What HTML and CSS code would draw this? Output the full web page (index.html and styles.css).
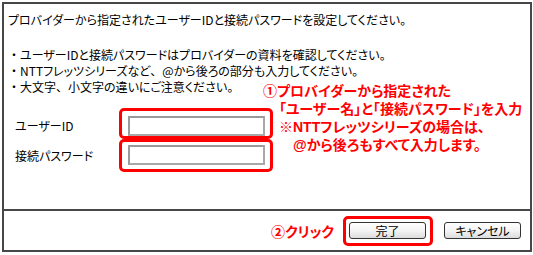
FILE: index.html
```html
<!DOCTYPE html>
<html lang="ja">
<head>
<meta charset="utf-8">
<link rel="stylesheet" href="styles.css">
</head>
<body>
<div class="panel">
  <div class="main">
    <p class="lead">プロバイダーから指定されたユーザーIDと接続パスワードを設定してください。</p>
    <ul class="notes">
      <li><span class="dot">・</span>ユーザーIDと接続パスワードはプロバイダーの資料を確認してください。</li>
      <li><span class="dot">・</span>NTTフレッツシリーズなど<span class="comma">、</span>@から後ろの部分も入力してください。</li>
      <li><span class="dot">・</span>大文字<span class="comma">、</span>小文字の違いにご注意ください。</li>
    </ul>
    <div class="form">
      <div class="row row-user">
        <label class="label" for="uid">ユーザーID</label>
        <div class="mark mark-user"><input id="uid" class="field" type="text"></div>
      </div>
      <div class="row row-pass">
        <label class="label" for="pwd">接続パスワード</label>
        <div class="mark mark-pass"><input id="pwd" class="field" type="password"></div>
      </div>
    </div>
    <div class="callout">
      <div class="c1">①プロバイダーから指定された</div>
      <div class="c2">「ユーザー名」と「接続パスワード」を入力</div>
      <div class="c3">※NTTフレッツシリーズの場合は、</div>
      <div class="c4">@から後ろもすべて入力します。</div>
    </div>
  </div>
  <div class="footer">
    <span class="click">②クリック</span>
    <div class="mark mark-btn"><button class="btn" type="button">完了</button></div>
    <button class="btn" type="button">キャンセル</button>
  </div>
</div>
</body>
</html>
```

FILE: styles.css
```css
html, body {
  margin: 0;
  padding: 0;
  background: #fff;
}
body {
  font-family: "Noto Sans CJK JP", "Noto Sans", sans-serif;
  font-size: 12px;
  color: #000;
  font-feature-settings: "palt";
}
.panel {
  margin: 2px;
  width: 530px;
  height: 250px;
  box-sizing: border-box;
  border: 2px solid #474747;
  display: flex;
  flex-direction: column;
}
.main {
  position: relative;
  height: 207px;
  border-bottom: 2px solid #474747;
  padding: 8px 0 0 4px;
  box-sizing: border-box;
}
.lead {
  margin: 0;
  line-height: 16px;
}
.notes {
  list-style: none;
  margin: 19px 0 0 0;
  padding: 0;
}
.notes li {
  line-height: 16px;
}
.dot {
  font-feature-settings: normal;
}
.comma {
  font-feature-settings: normal;
}
.form {
  margin-top: 13px;
  display: flex;
  flex-direction: column;
}
.row {
  display: flex;
  align-items: center;
}
.label {
  width: 111px;
  padding-left: 7px;
  box-sizing: border-box;
  line-height: 16px;
}
.row-user .label {
  padding-top: 4px;
}
.mark {
  border: 3px solid #f00;
  border-radius: 5px;
  box-sizing: border-box;
}
.mark-user {
  width: 154px;
  height: 31px;
  padding: 5px 0 0 6px;
}
.mark-pass {
  width: 154px;
  height: 33px;
  padding: 3px 0 0 6px;
}
.field {
  display: block;
  width: 137px;
  height: 20px;
  box-sizing: border-box;
  margin: 0;
  padding: 0 2px;
  border: 2px solid #a8a8a8;
  border-top-color: #9a9a9a;
  border-left-color: #9a9a9a;
  background: #fff;
  font: inherit;
  outline: none;
}
.callout {
  position: absolute;
  left: 259px;
  top: 78px;
  color: #f00;
  font-family: "Liberation Sans", "Noto Sans CJK JP", sans-serif;
  font-weight: bold;
  font-size: 14px;
  line-height: 18px;
}
.c2, .c3 {
  padding-left: 16px;
}
.c4 {
  padding-left: 30px;
}
.footer {
  flex: 1;
  display: flex;
  align-items: center;
  justify-content: flex-end;
  padding-right: 9px;
}
.click {
  color: #f00;
  font-weight: bold;
  font-size: 14px;
  margin-right: 9px;
}
.mark-btn {
  padding: 3px 4px 4px 3px;
  margin-right: 11px;
}
.btn {
  display: block;
  width: 77px;
  height: 17px;
  margin: 0;
  padding: 0;
  border: 1px solid #333;
  border-radius: 3px;
  background: linear-gradient(#ffffff, #f4f4f4 50%, #dcdcdc);
  font-family: "Noto Sans CJK JP", sans-serif;
  font-size: 12px;
  line-height: 15px;
  color: #000;
  font-feature-settings: "palt";
}
```
